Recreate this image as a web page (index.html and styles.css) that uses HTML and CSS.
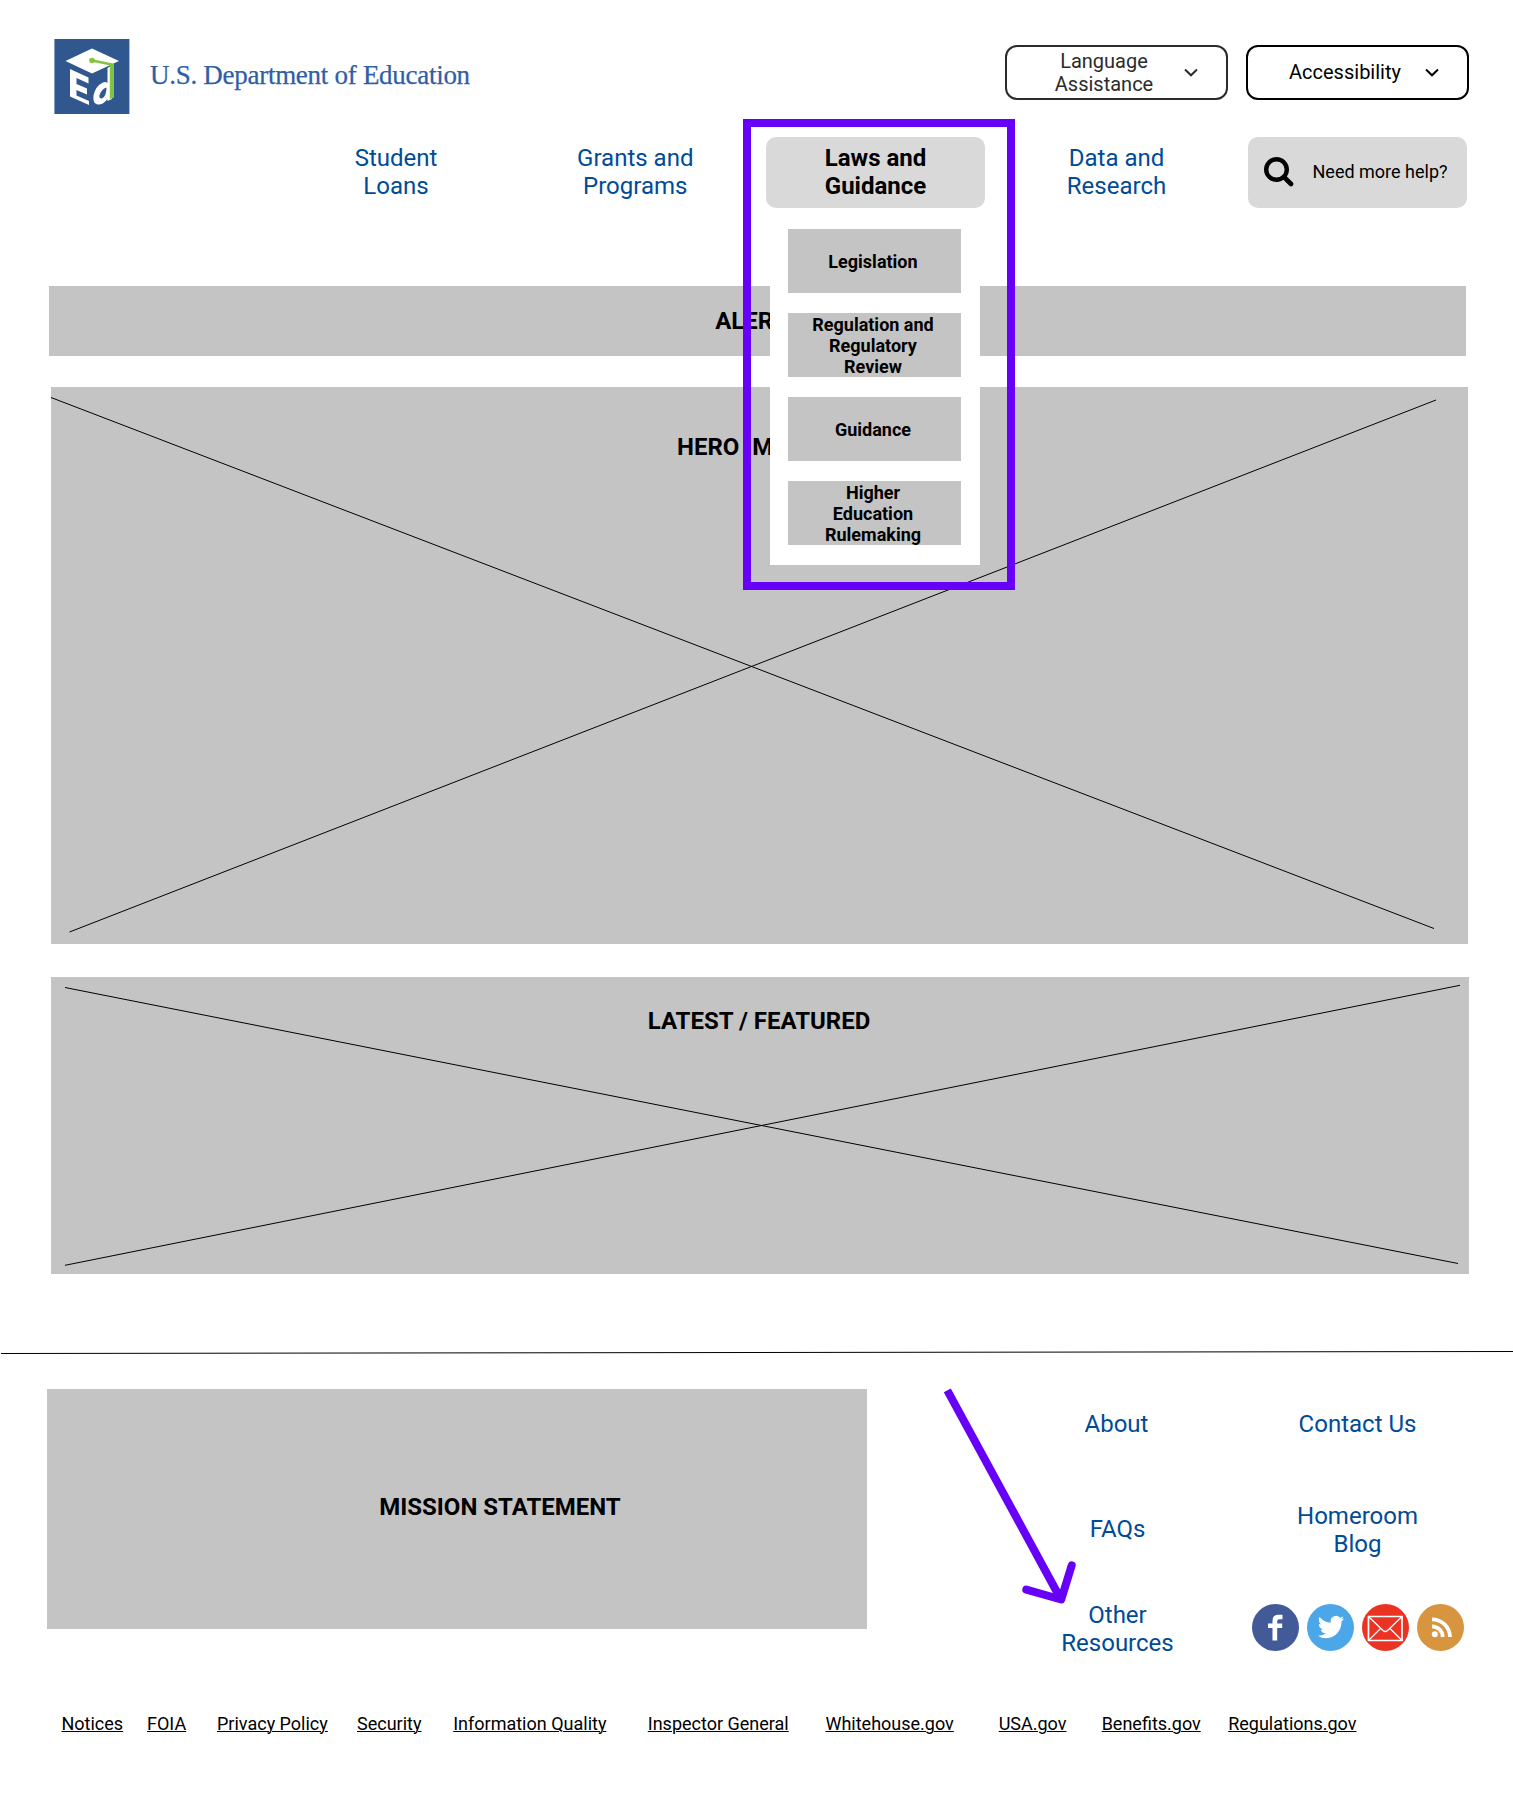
FILE: index.html
```html
<!DOCTYPE html>
<html lang="en">
<head>
<meta charset="utf-8">
<title>U.S. Department of Education</title>
<link rel="stylesheet" href="styles.css">
</head>
<body>
<header class="top">
  <a class="brand">
    <svg class="logo" viewBox="0 0 75 75" width="75" height="75">
      <rect x=".4" width="75" height="75" fill="#30588f"/>
      <path d="M11.5 22 38 9.500 65 22 38 34.500Z" fill="#fff"/>
      <path d="M16 30 34.500 38.500V44.500L22.500 39V45L33 49.500V55.500L22.500 51V56.500L35 62V66L16 57.500Z" fill="#fff"/>
      <path fill-rule="evenodd" d="M53.500 29 58 26.500V60L53.500 62V60Q49 66 43.500 65.500 38.500 64.500 39.500 56.500 41.500 47 49 43.500 52 42.500 53.500 44ZM52.500 48.500Q47.500 50 45.500 56 45 60 48 59.500 52.500 57 52.500 48.500Z" fill="#fff"/>
      <path d="M38 21.500 58 25.500V59" fill="none" stroke="#82c341" stroke-width="2.500"/>
      <path d="M55.500 25H60V58.500L55.500 60.500Z" fill="#82c341"/>
      <path d="M55.200 28V60" stroke="#fff" stroke-width=".8"/>
      <circle cx="38" cy="21.500" r="2.800" fill="#82c341"/>
    </svg>
    <span class="wordmark">U.S. Department of Education</span>
  </a>
  <div class="tools">
    <button class="select select-soft"><span>Language Assistance</span>
      <svg width="14" height="9" viewBox="0 0 14 9"><path d="M1 1.500 7 7.300 13 1.500"/></svg></button>
    <button class="select"><span>Accessibility</span>
      <svg width="14" height="9" viewBox="0 0 14 9"><path d="M1 1.500 7 7.300 13 1.500"/></svg></button>
  </div>
</header>

<nav class="nav">
  <a class="nav-item nav-first">Student<br>Loans</a>
  <a class="nav-item nav-second">Grants and<br>Programs</a>
  <div class="nav-item nav-active">Laws and<br>Guidance
    <div class="menu">
      <a>Legislation</a>
      <a>Regulation and Regulatory Review</a>
      <a>Guidance</a>
      <a>Higher Education Rulemaking</a>
    </div>
    <div class="highlight"></div>
  </div>
  <a class="nav-item">Data and<br>Research</a>
  <a class="help">
    <svg width="30" height="30" viewBox="0 0 30 30"><circle cx="12.500" cy="12.500" r="10.300" fill="none" stroke="#000" stroke-width="4.400"/><path d="M20 20 27 27" stroke="#000" stroke-width="4.600" stroke-linecap="round"/></svg>
    <span>Need more help?</span>
  </a>
</nav>

<main class="main">
  <section class="alerts"><h2>ALERTS</h2></section>
  <section class="hero">
    <svg class="cross" width="1417" height="557" viewBox="0 0 1417 557"><path d="M0 10.500 1383 541.500M18.500 545 1385 13"/></svg>
    <h2>HERO IMAGE</h2>
  </section>
  <section class="latest">
    <svg class="cross" width="1418" height="297" viewBox="0 0 1418 297"><path d="M14 10.500 1407 286.500M14 288.300 1409 8.300"/></svg>
    <h2>LATEST / FEATURED</h2>
  </section>
</main>

<svg class="divider" width="1513" height="4" viewBox="0 0 1513 4"><path d="M1 3.500 1513 1.500" stroke="#000"/></svg>

<footer class="footer">
  <section class="mission"><h2>MISSION STATEMENT</h2></section>
  <div class="links links-a">
    <a>About</a><a>FAQs</a><a>Other<br>Resources</a>
  </div>
  <div class="links links-b">
    <a>Contact Us</a><a>Homeroom<br>Blog</a>
    <div class="social">
      <svg width="47" height="47" viewBox="0 0 47 47"><circle cx="23.500" cy="23.500" r="23.500" fill="#435a98"/><path d="M20.500 36.500V24H16V19.500H20.500V17Q20.500 10.800 26 10.800H30.500V15.200H27.500Q25.200 15.200 25.200 17.300V19.500H30.200V24H25.200V36.500Z" fill="#fff"/></svg>
      <svg width="47" height="47" viewBox="0 0 47 47"><circle cx="23.500" cy="23.500" r="23.500" fill="#4ba7e8"/><path transform="translate(10.800 9.400) scale(1.100 1.140)" d="M23.950 4.570a10 10 0 0 1-2.820.770 4.960 4.960 0 0 0 2.160-2.720c-.950.550-2 .950-3.130 1.180a4.920 4.920 0 0 0-8.380 4.480C7.690 8.090 4.070 6.130 1.640 3.160a4.820 4.820 0 0 0-.670 2.480c0 1.710.870 3.210 2.190 4.100a4.900 4.900 0 0 1-2.230-.620v.060a4.920 4.920 0 0 0 3.950 4.830 5 5 0 0 1-2.210.080 4.940 4.940 0 0 0 4.600 3.420A9.870 9.870 0 0 1 0 19.540a13.990 13.990 0 0 0 7.550 2.210c9.050 0 14-7.500 14-13.980 0-.210 0-.420-.020-.630a9.940 9.940 0 0 0 2.420-2.570Z" fill="#fff"/></svg>
      <svg width="47" height="47" viewBox="0 0 47 47"><circle cx="23.500" cy="23.500" r="23.500" fill="#ea3323"/><g fill="none" stroke="#fff"><path d="M6.500 12.500H40V36.500H6.500Z" stroke-width="1.700"/><path d="M7 13 21 26.500Q23.300 28.500 25.600 26.500L39.500 13M7 36 18.500 24.500M39.500 36 28 24.500" stroke-width="1.300"/></g></svg>
      <svg width="47" height="47" viewBox="0 0 47 47"><circle cx="23.500" cy="23.500" r="23.500" fill="#d6953e"/><circle cx="17.800" cy="30.300" r="3" fill="#fff"/><path d="M15 22.300A10.700 10.700 0 0 1 25.700 33M15 15.300A18 18 0 0 1 33 33" fill="none" stroke="#fff" stroke-width="3.800"/></svg>
    </div>
  </div>
  <svg class="arrow" width="140" height="222" viewBox="0 0 140 222"><path d="M7.300 5.300 121 214.500"/><path d="M86.300 204.700 121.200 214.500 131.700 180.300" stroke-linecap="round" stroke-linejoin="round"/></svg>
</footer>

<div class="legal">
  <a>Notices</a><a>FOIA</a><a>Privacy Policy</a><a>Security</a><a>Information Quality</a><a>Inspector General</a><a>Whitehouse.gov</a><a>USA.gov</a><a>Benefits.gov</a><a>Regulations.gov</a>
</div>
</body>
</html>
```
FILE: styles.css
```css
* { box-sizing: border-box; }
body {
  margin: 0;
  width: 1513px;
  height: 1811px;
  background: #fff;
  color: #000;
  font-family: Roboto, "Liberation Sans", sans-serif;
  overflow: hidden;
}
svg { display: block; flex: none; }
h2 { margin: 0; font-size: 24px; line-height: 28px; font-weight: 700; }

.top {
  display: flex;
  justify-content: space-between;
  padding: 39px 44px 0 54px;
  height: 137px;
}
.brand { display: flex; gap: 21px; height: 75px; align-items: center; }
.logo { overflow: visible; }
.wordmark {
  padding-bottom: 2px;
  font-family: Georgia, "Liberation Serif", serif;
  font-size: 27px;
  letter-spacing: -.28px;
  -webkit-text-stroke: .25px #2f5ea5;
  color: #2f5ea5;
  white-space: nowrap;
}
.tools { display: flex; gap: 18px; padding-top: 6px; }
.select {
  display: flex;
  align-items: center;
  width: 223px;
  height: 55px;
  padding: 0 28px 0 31px;
  border: 2px solid #000;
  border-radius: 12px;
  background: #fff;
  color: #000;
  font: 20px/23px Roboto, sans-serif;
}
.select span { width: 132px; text-align: center; }
.select svg { margin-left: 14px; fill: none; stroke: currentColor; stroke-width: 2; }
.select-soft { border-color: #2b2b2b; color: #2b2b2b; }

.nav { display: flex; gap: 22px; padding-left: 289px; height: 149px; }
.nav-item {
  width: 219px;
  height: 71px;
  padding-top: 7px;
  font-size: 24px;
  line-height: 28px;
  text-align: center;
  color: #004b97;
}
.nav-first { width: 214px; }
.nav-second { padding-left: 1.5px; }
.nav-active {
  position: relative;
  z-index: 2;
  border-radius: 10px;
  background: #d9d9d9;
  color: #000;
  font-weight: 700;
}
.menu {
  position: absolute;
  left: 4px;
  top: 74px;
  width: 210px;
  height: 354px;
  padding: 18px 19px 20px 18px;
  display: flex;
  flex-direction: column;
  gap: 20px;
  background: #fff;
}
.menu a {
  height: 64px;
  padding: 0 21px 0 18px;
  display: flex;
  align-items: center;
  justify-content: center;
  background: #c4c4c4;
  font-size: 18px;
  line-height: 21px;
}
.highlight {
  position: absolute;
  left: -23px;
  top: -18px;
  width: 272px;
  height: 471px;
  border: 8px solid #6600f6;
}
.help {
  display: flex;
  align-items: center;
  width: 219px;
  height: 71px;
  padding: 0 0 2px 15.5px;
  gap: 19px;
  border-radius: 10px;
  background: #d9d9d9;
  font-size: 18px;
  white-space: nowrap;
}

.alerts {
  width: 1417px;
  height: 70px;
  margin-left: 49px;
  padding: 21px 0 0 2px;
  background: #c4c4c4;
  text-align: center;
}
.hero, .latest { position: relative; background: #c4c4c4; margin-left: 51px; }
.hero { width: 1417px; height: 557px; margin-top: 31px; padding: 46px 0 0 626px; }
.latest { width: 1418px; height: 297px; margin-top: 33px; padding: 30px 2px 0 0; text-align: center; }
.hero h2, .latest h2 { position: relative; }
.cross { position: absolute; left: 0; top: 0; fill: none; stroke: #000; stroke-width: 1; }

.divider { margin-top: 76px; }

.footer { position: relative; display: flex; padding-left: 47px; margin-top: 35px; height: 321px; }
.mission {
  width: 820px;
  height: 240px;
  padding: 104px 0 0 86px;
  background: #c4c4c4;
  text-align: center;
}
.links {
  display: flex;
  flex-direction: column;
  width: 219px;
  padding-top: 21px;
  text-align: center;
  font-size: 24px;
  line-height: 28px;
  color: #004b97;
}
.links-a { margin-left: 140px; }
.links-a a:nth-child(2) { margin-top: 77px; padding-left: 2px; }
.links-a a:nth-child(3) { margin-top: 58px; padding-left: 2px; }
.links-b { margin-left: 22px; }
.links-b a:nth-child(2) { margin-top: 64px; }
.social { display: flex; gap: 8px; margin: 46px 0 0 4px; }
.arrow {
  position: absolute;
  left: 940px;
  top: -4px;
  fill: none;
  stroke: #6600f6;
  stroke-width: 8;
}

.legal {
  display: grid;
  grid-template-columns: 85.500px 70px 140px 96.200px 194.600px 177.700px 173.200px 103px 126.500px 130px;
  padding-left: 61.500px;
  margin-top: 3px;
  font-size: 18px;
  line-height: 21px;
  white-space: nowrap;
}
.legal a { text-decoration: underline; text-decoration-thickness: 1px; }
```
